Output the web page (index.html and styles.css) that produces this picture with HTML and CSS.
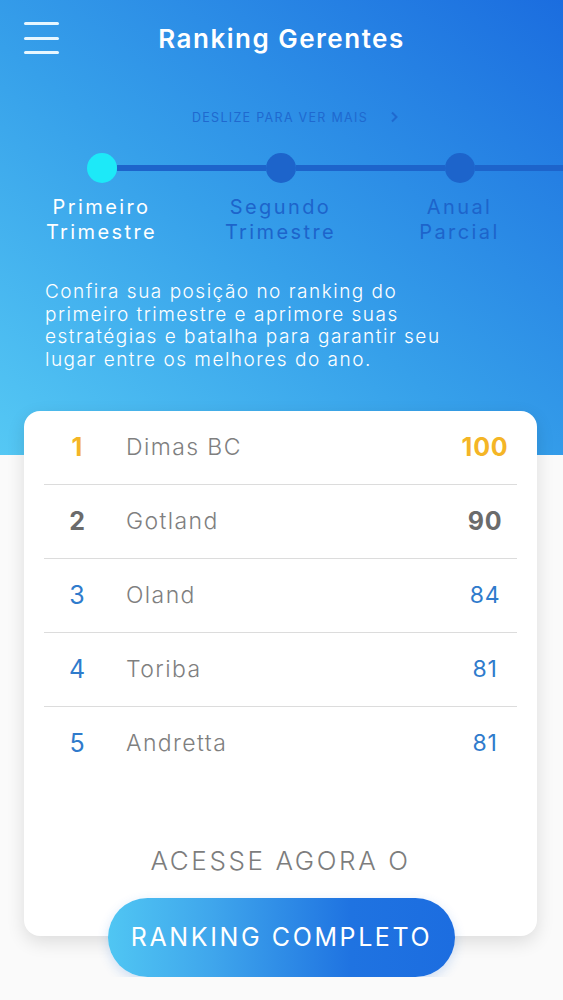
FILE: index.html
```html
<!DOCTYPE html>
<html>
<head>
  <title>Ranking Gerentes</title>
  <meta name="viewport" content="width=device-width, initial-scale=1">
  <link rel="stylesheet" href="styles.css">
</head>
<body>
  <div class="hero">
    <header class="topbar">
      <button class="menu" aria-label="Menu">
        <span></span>
        <span></span>
        <span></span>
      </button>
      <h1>Ranking Gerentes</h1>
    </header>

    <div class="swipe">
      DESLIZE PARA VER MAIS
      <svg width="9" height="12" viewBox="0 0 9 12"><path d="M2 1.5 L6.5 6 L2 10.5" fill="none" stroke="currentColor" stroke-width="2"/></svg>
    </div>

    <div class="track">
      <span class="dot active"></span>
      <span class="line"></span>
      <span class="dot"></span>
      <span class="line"></span>
      <span class="dot"></span>
      <span class="line last"></span>
    </div>

    <div class="steps">
      <div class="step active">Primeiro<br>Trimestre</div>
      <div class="step">Segundo<br>Trimestre</div>
      <div class="step">Anual<br>Parcial</div>
    </div>

    <p class="intro">
      Confira sua posição no ranking do<br>
      primeiro trimestre e aprimore suas<br>
      estratégias e batalha para garantir seu<br>
      lugar entre os melhores do ano.
    </p>
  </div>

  <div class="card">
    <div class="row gold">
      <span class="pos">1</span>
      <span class="name">Dimas BC</span>
      <span class="score">100</span>
    </div>
    <div class="row grey">
      <span class="pos">2</span>
      <span class="name">Gotland</span>
      <span class="score">90</span>
    </div>
    <div class="row">
      <span class="pos">3</span>
      <span class="name">Oland</span>
      <span class="score">84</span>
    </div>
    <div class="row">
      <span class="pos">4</span>
      <span class="name">Toriba</span>
      <span class="score">81</span>
    </div>
    <div class="row">
      <span class="pos">5</span>
      <span class="name">Andretta</span>
      <span class="score">81</span>
    </div>

    <p class="cta-text">ACESSE AGORA O</p>
  </div>

  <a class="cta" href="#">RANKING COMPLETO</a>
</body>
</html>
```

FILE: styles.css
```css
body {
  font-family: Inter, "DejaVu Sans", sans-serif;
  margin: 0;
  padding: 0;
  background-color: #fafafa;
  width: 563px;
  overflow: hidden;
}
.hero {
  background: linear-gradient(to top right, #55c8f4 0%, #36a0ea 45%, #1b6ddf 100%);
  padding-bottom: 83px;
  color: #fff;
}
.topbar {
  display: grid;
  grid-template-columns: 1fr auto 1fr;
  align-items: center;
  height: 76px;
}
.menu {
  display: flex;
  flex-direction: column;
  gap: 11.5px;
  width: 35px;
  margin-left: 24px;
  padding: 0;
  background: none;
  border: none;
}
.menu span {
  display: block;
  height: 3px;
  border-radius: 2px;
  background-color: #e6f6ff;
}
.topbar h1 {
  margin: 0;
  font-size: 26px;
  font-weight: 600;
  letter-spacing: 1.5px;
}
.swipe {
  display: flex;
  justify-content: center;
  align-items: center;
  gap: 22px;
  margin-top: 33px;
  padding-left: 28px;
  height: 16px;
  font-size: 12.5px;
  letter-spacing: 1.3px;
  color: #1f69cf;
}
.track {
  display: flex;
  align-items: center;
  margin-top: 28px;
  padding-left: 87px;
}
.dot {
  flex: none;
  width: 30px;
  height: 30px;
  border-radius: 50%;
  background-color: #1d64cb;
}
.dot.active {
  background-color: #1de9f8;
}
.line {
  flex: none;
  width: 149px;
  height: 6px;
  background-color: #1d64cb;
}
.line.last {
  flex: 1;
}
.steps {
  display: grid;
  grid-template-columns: repeat(3, 179px);
  margin-top: 12px;
  padding-left: 12px;
}
.step {
  text-align: center;
  font-size: 20px;
  line-height: 24.5px;
  letter-spacing: 2.4px;
  color: #1d64cb;
}
.step.active {
  color: #fff;
}
.intro {
  margin: 37px 0 0;
  padding-left: 45px;
  font-size: 19px;
  line-height: 22.7px;
  font-weight: 300;
  letter-spacing: 1.5px;
}
.card {
  position: relative;
  margin: -44px 26px 0 24px;
  padding: 0 20px 60px;
  background-color: #fff;
  border-radius: 16px;
  box-shadow: 0 6px 18px rgba(0, 0, 0, 0.12);
}
.row {
  display: grid;
  grid-template-columns: 66px 1fr 64px;
  align-items: center;
  height: 73px;
  border-bottom: 1px solid #dcdcdc;
  color: #2f7bcc;
}
.row:last-of-type {
  border-bottom: none;
}
.pos {
  text-align: center;
  font-size: 25px;
  font-weight: 400;
}
.name {
  padding-left: 16px;
  font-size: 23px;
  font-weight: 300;
  letter-spacing: 1.4px;
  color: #7f7f7f;
}
.score {
  text-align: center;
  font-size: 23px;
  letter-spacing: 0.8px;
}
.row.gold .pos,
.row.gold .score {
  color: #f4b526;
  font-weight: 700;
}
.row.grey .pos,
.row.grey .score {
  color: #6b6b6b;
  font-weight: 700;
}
.gold .score,
.grey .score {
  font-size: 25px;
}
.cta-text {
  margin: 66px 0 0;
  text-align: center;
  font-size: 26px;
  line-height: 30px;
  font-weight: 300;
  letter-spacing: 2.6px;
  color: #7d7d7d;
}
.cta {
  position: relative;
  display: flex;
  align-items: center;
  justify-content: center;
  width: 347px;
  height: 79px;
  margin: -38px auto 0;
  border-radius: 40px;
  background: linear-gradient(to right, #50c6f3 0%, #3fa6ec 30%, #1f73e1 70%, #1c6de0 100%);
  box-shadow: 0 4px 12px rgba(30, 110, 220, 0.2);
  color: #fff;
  font-size: 25px;
  letter-spacing: 2.6px;
  text-decoration: none;
}
```
